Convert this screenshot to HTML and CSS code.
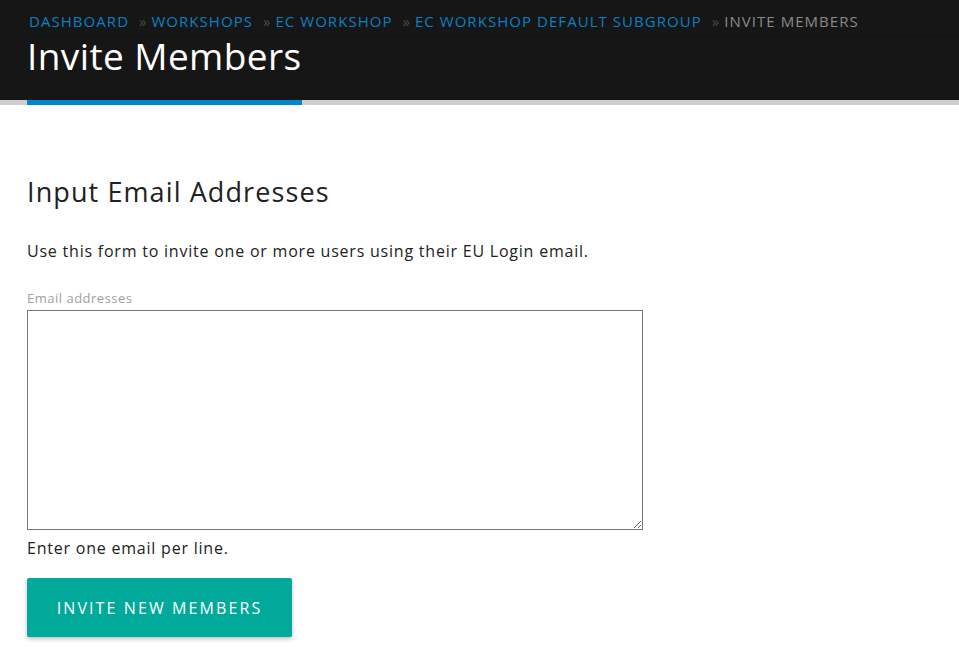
FILE: index.html
```html
<!DOCTYPE html>
<html>
<head>
    <title>Invite Members</title>
    <link rel="stylesheet" href="styles.css">
</head>
<body>
    <header class="page-header">
        <nav class="breadcrumb">
            <a href="#">Dashboard</a>
            <span class="sep">&raquo;</span>
            <a href="#">Workshops</a>
            <span class="sep">&raquo;</span>
            <a href="#">EC Workshop</a>
            <span class="sep">&raquo;</span>
            <a href="#">EC Workshop Default Subgroup</a>
            <span class="sep">&raquo;</span>
            <span class="current">Invite Members</span>
        </nav>
        <h1>Invite Members</h1>
    </header>
    <div class="header-rule"><span class="header-rule-active"></span></div>

    <main class="content">
        <h2>Input Email Addresses</h2>
        <p class="intro">Use this form to invite one or more users using their EU Login email.</p>

        <form class="invite-form" onsubmit="return false">
            <label for="emails">Email addresses</label>
            <textarea id="emails" name="emails"></textarea>
            <p class="help">Enter one email per line.</p>
            <button type="submit">Invite new members</button>
        </form>
    </main>
</body>
</html>
```

FILE: styles.css
```css
body { margin: 0; font-family: "Open Sans", sans-serif; color: #222; background: #fff; }

.page-header { background: #161616; height: 100px; padding: 0 27px; box-sizing: border-box; }
.breadcrumb { padding: 11px 2px 4px; margin-right: -27px; border-bottom: 1px solid #101010; font-size: 15px; line-height: 20px; text-transform: uppercase; letter-spacing: 1.05px; white-space: nowrap; }
.breadcrumb a { color: #0a80c4; text-decoration: none; }
.breadcrumb .sep { color: #4a4a4a; margin: 0 0 0 5px; letter-spacing: 0; }
.breadcrumb .current { color: #8a8a8a; }
.page-header h1 { margin: 0; color: #fff; font-size: 37px; font-weight: 400; line-height: 40px; letter-spacing: 0.4px; }

.header-rule { height: 5px; background: #cfcfcf; padding-left: 27px; }
.header-rule-active { display: block; width: 275px; height: 5px; background: #0088cc; }

.content { padding: 70px 27px 20px; }
.content h2 { margin: 0 0 30px; font-size: 27px; font-weight: 400; line-height: 34px; letter-spacing: 1.1px; }
.intro { margin: 0 0 27px; font-size: 16px; line-height: 24px; letter-spacing: 0.78px; }

.invite-form label { display: block; font-size: 13px; line-height: 16px; color: #a0a0a0; margin-bottom: 4px; letter-spacing: 0.5px; }
.invite-form textarea { display: block; width: 616px; height: 220px; box-sizing: border-box; border: 1px solid #777; margin: 0; padding: 6px; font: inherit; resize: vertical; }
.help { margin: 6px 0 18px; font-size: 16px; line-height: 24px; letter-spacing: 0.78px; }
.invite-form button { width: 265px; height: 59px; padding-bottom: 1px; background: #00a99a; color: #fff; border: none; border-radius: 2px; font-family: inherit; font-size: 16px; letter-spacing: 2.1px; text-transform: uppercase; box-shadow: 0 2px 4px rgba(0,0,0,0.25); cursor: pointer; }
```
